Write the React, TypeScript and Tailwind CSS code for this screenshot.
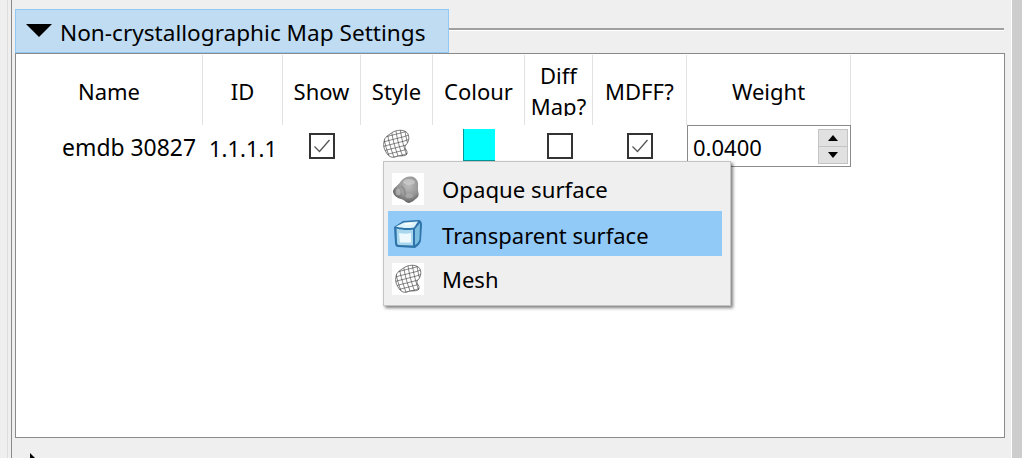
import { useId } from 'react'

const font = 'font-["Noto_Sans","Open_Sans",sans-serif]'

const columns = [
  { label: 'Name', width: 'w-[187px]' },
  { label: 'ID', width: 'w-[80px]' },
  { label: 'Show', width: 'w-[78px]' },
  { label: 'Style', width: 'w-[72px]' },
  { label: 'Colour', width: 'w-[92px]' },
  { label: 'Diff Map?', width: 'w-[68px]' },
  { label: 'MDFF?', width: 'w-[94px]' },
  { label: 'Weight', width: 'w-[164px]' },
]

const blob =
  'M3 13C3 8 8 6 12 3C18 0 25 1 27 5C29 10 27 14 24 17C23 20 27 21 26 25C24 28 18 26 14 28C10 29 7 27 5 23C3 20 2 16 3 13Z'

const gridLines = [-4, 0.5, 5, 9.5, 14, 18.5, 23, 27.5, 32]

function MeshIcon({ className }: { className: string }) {
  const id = useId()
  return (
    <svg viewBox="0 0 30 30" className={className}>
      <clipPath id={id}>
        <path d={blob} />
      </clipPath>
      <path d={blob} fill="#ffffff" />
      <g clipPath={`url(#${id})`} fill="none" stroke="#3a3a3a" strokeWidth="0.6">
        {gridLines.map((n) => (
          <path key={`h${n}`} d={`M-2 ${n + 5}C8 ${n + 1} 20 ${n} 32 ${n - 5}`} />
        ))}
        {gridLines.map((n) => (
          <path key={`v${n}`} d={`M${n - 4} -2C${n - 3} 8 ${n} 20 ${n + 5} 32`} />
        ))}
      </g>
      <path d={blob} fill="none" stroke="#444444" strokeWidth="0.7" />
    </svg>
  )
}

function OpaqueIcon({ className }: { className: string }) {
  const id = useId()
  return (
    <svg viewBox="0 0 32 32" className={className}>
      <radialGradient id={id} cx="0.6" cy="0.35" r="0.7">
        <stop offset="0" stopColor="#bdbdbd" />
        <stop offset="0.6" stopColor="#939393" />
        <stop offset="1" stopColor="#565656" />
      </radialGradient>
      <path
        d="M9 8C12 4 19 2 23 5C27 8 26 12 26 16C26 20 28 22 25 25C22 27 21 29 17 30C14 30 13 27 9 26C5 25 1 22 1 18C2 14 6 13 9 8Z"
        fill={`url(#${id})`}
      />
      <ellipse cx="17" cy="9" rx="6" ry="3" fill="#d6d6d6" opacity="0.6" />
      <ellipse cx="6" cy="19" rx="2.5" ry="3.5" fill="#c8c8c8" opacity="0.55" />
      <path d="M9 13C12 15 14 19 13 25" fill="none" stroke="#747474" strokeWidth="1.2" opacity="0.6" />
      <ellipse cx="17" cy="23" rx="4" ry="2.2" fill="#b8b8b8" opacity="0.5" />
    </svg>
  )
}

function IceIcon({ className }: { className: string }) {
  return (
    <svg viewBox="0 0 32 32" className={className}>
      <path d="M2 9L11 3L26 2C29 2 30 4 30 7L29 22C29 25 26 28 23 30L6 29C4 29 3 27 3 25Z" fill="#2e74aa" />
      <path d="M4 8.5L12 4.5L26 3.5L22 9.5C16 10.5 9 10 4 8.5Z" fill="#dff3fb" />
      <path d="M4.5 10.5C10 12 16 12.5 21 11.5L21 27.5L7 27C5.5 27 5 26 5 24Z" fill="#a9d8ee" />
      <path d="M7 15C11 16 15 16 19 15L19 24.5L8 24.5Z" fill="#eef9fd" />
      <path d="M23 11L28 5L27.5 21C27 24 25 26 23 27Z" fill="#7dbfe0" />
      <path d="M13 6L20 5.5" stroke="#ffffff" strokeWidth="1.4" fill="none" />
    </svg>
  )
}

function CheckBox({ checked }: { checked?: boolean }) {
  return (
    <div className="w-[26px] h-[26px] border-2 border-[#333333] bg-white flex items-center justify-center">
      {checked && (
        <svg viewBox="0 0 22 22" className="w-[22px] h-[22px]">
          <path d="M3.5 11.5L8.5 16.5L18.5 5" fill="none" stroke="#555555" strokeWidth="1.3" />
        </svg>
      )}
    </div>
  )
}

function Cell({ width, children }: { width: string; children?: React.ReactNode }) {
  return <div className={`${width} h-[42px] flex justify-center items-start pt-[8px]`}>{children}</div>
}

export default function App() {
  return (
    <div className={`${font} w-[1022px] h-[458px] overflow-hidden flex bg-[#efefef] text-black text-[22px]`}>
      <div className="ml-[7px] border-l border-[#dddddd] pl-[3px] flex-1 flex">
        <div className="border-l border-[#8a8a8a] pl-[3px] flex-1 pr-[6px]">
          <div className="flex pt-[9px]">
            <div className="w-[434px] h-[44px] border border-[#90c8f6] bg-[#bfdcf3] flex items-center pl-[10px]">
              <div className="w-0 h-0 border-x-[13px] border-x-transparent border-t-[13px] border-t-black mb-[2px]" />
              <span className="ml-[8px] mt-[4px] leading-none whitespace-nowrap text-[22.6px]">
                Non-crystallographic Map Settings
              </span>
            </div>
            <div className="flex-1 h-[3px] mt-[19px] mr-[1px] bg-[#a0a0a0] border-b border-white" />
          </div>

          <div className="relative w-[990px] h-[385px] border border-[#8a8a8a] bg-white">
            <div className="flex pt-[1px]">
              {columns.map((col) => (
                <div
                  key={col.label}
                  className={`${col.width} h-[70px] border-r border-[#e2e2e2] text-center`}
                >
                  {col.label === 'Diff Map?' ? (
                    <div className="h-[61px] overflow-hidden leading-[31px] pt-[5px]">
                      Diff
                      <br />
                      Map?
                    </div>
                  ) : (
                    <div className="leading-[72px]">{col.label}</div>
                  )}
                </div>
              ))}
            </div>

            <div className="flex">
              <div className="w-[187px] h-[42px] text-right pr-[7px] leading-[46px] whitespace-nowrap text-[22.9px]">
                emdb 30827
              </div>
              <div className="w-[80px] h-[42px] text-center leading-[46px]">1.1.1.1</div>
              <Cell width="w-[78px]">
                <CheckBox checked />
              </Cell>
              <Cell width="w-[72px]">
                <MeshIcon className="w-[30px] h-[30px] -mt-[4px] -ml-[2px]" />
              </Cell>
              <Cell width="w-[92px]">
                <div className="w-[32px] h-[32px] -mt-[4px] bg-[#00ffff] border-l border-b border-[#009a9a]" />
              </Cell>
              <Cell width="w-[68px]">
                <div className="ml-[2px]">
                  <CheckBox />
                </div>
              </Cell>
              <Cell width="w-[94px]">
                <CheckBox checked />
              </Cell>
              <div className="w-[164px] h-[42px] border border-[#8a8a8a] flex items-center justify-between pl-[5px] pr-[2px]">
                <span className="leading-[46px] mt-[1px]">0.0400</span>
                <div className="w-[30px] h-[35px] flex flex-col border border-[#c4c4c4] bg-[#e1e1e1]">
                  <div className="flex-1 border-b border-[#c4c4c4] flex items-center justify-center">
                    <div className="w-0 h-0 border-x-[5px] border-x-transparent border-b-[6px] border-b-black" />
                  </div>
                  <div className="flex-1 flex items-center justify-center">
                    <div className="w-0 h-0 border-x-[5px] border-x-transparent border-t-[6px] border-t-black" />
                  </div>
                </div>
              </div>
            </div>

            <div className="absolute left-[367px] top-[107px] w-[348px] h-[145px] border border-[#c4c4c4] bg-[#efefef] shadow-[2px_2px_3px_rgba(0,0,0,0.5)] pl-[4px] pr-[8px] pt-[4px]">
              <div className="h-[45px] flex items-center pl-[4px]">
                <div className="w-[32px] h-[32px] bg-white">
                  <OpaqueIcon className="w-[32px] h-[32px]" />
                </div>
                <span className="ml-[18px] mt-[3px] text-[22.2px]">Opaque surface</span>
              </div>
              <div className="h-[45px] flex items-center pl-[4px] bg-[#91c9f7]">
                <IceIcon className="w-[32px] h-[32px]" />
                <span className="ml-[18px] mt-[3px]">Transparent surface</span>
              </div>
              <div className="h-[45px] flex items-center pl-[4px]">
                <div className="w-[32px] h-[32px] bg-white flex items-center justify-center">
                  <MeshIcon className="w-[30px] h-[30px]" />
                </div>
                <span className="ml-[18px] mt-[1px]">Mesh</span>
              </div>
            </div>
          </div>

          <div className="ml-[15px] mt-[15px] w-0 h-0 border-y-[6px] border-y-transparent border-l-[6px] border-l-black" />
        </div>
      </div>
      <div className="w-[11px] h-full border-l border-white bg-[#cdcdcd]" />
    </div>
  )
}
